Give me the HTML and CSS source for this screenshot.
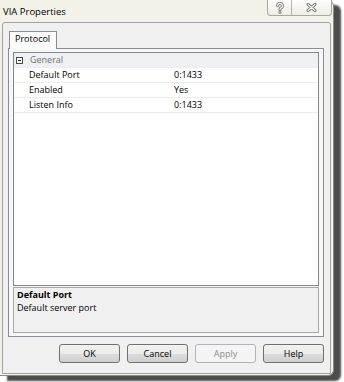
FILE: index.html
```html
<!DOCTYPE html>
<html lang="en">
<head>
    <meta charset="UTF-8">
    <title>VIA Properties</title>
    <link rel="stylesheet" href="styles.css">
</head>
<body>
<div class="window">
    <div class="titlebar">
        <span class="title">VIA Properties</span>
        <div class="caption">
            <span class="cap-btn help">
                <svg width="10" height="12" viewBox="0 0 10 12">
                    <path d="M2.6 3.8 A2.4 2.4 0 1 1 5.6 6.1 Q5 6.5 5 7.4 V7.8" fill="none" stroke="#7a7a7a" stroke-width="3" stroke-linecap="round"/>
                    <path d="M2.6 3.8 A2.4 2.4 0 1 1 5.6 6.1 Q5 6.5 5 7.4 V7.8" fill="none" stroke="#fff" stroke-width="1.1" stroke-linecap="round"/>
                    <circle cx="5" cy="10.2" r="1.5" fill="#7a7a7a"/>
                    <circle cx="5" cy="10.2" r="0.6" fill="#fff"/>
                </svg>
            </span>
            <span class="cap-btn close">
                <svg width="11" height="9" viewBox="0 0 11 9">
                    <path d="M2 1.5 L9 7.5 M9 1.5 L2 7.5" stroke="#7a7a7a" stroke-width="3" stroke-linecap="round"/>
                    <path d="M2 1.5 L9 7.5 M9 1.5 L2 7.5" stroke="#fff" stroke-width="1.1" stroke-linecap="round"/>
                </svg>
            </span>
        </div>
    </div>
    <div class="dialog">
        <div class="tabs">
            <span class="tab">Protocol</span>
        </div>
        <div class="tab-panel">
            <div class="grid">
                <div class="row category">
                    <span class="margin"><span class="toggle"></span></span>
                    <span class="name">General</span>
                </div>
                <div class="row">
                    <span class="margin"></span>
                    <span class="name">Default Port</span>
                    <span class="value">0:1433</span>
                </div>
                <div class="row">
                    <span class="margin"></span>
                    <span class="name">Enabled</span>
                    <span class="value">Yes</span>
                </div>
                <div class="row">
                    <span class="margin"></span>
                    <span class="name">Listen Info</span>
                    <span class="value">0:1433</span>
                </div>
            </div>
            <div class="desc">
                <div class="desc-title">Default Port</div>
                <div class="desc-text">Default server port</div>
            </div>
        </div>
        <div class="buttons">
            <button class="btn">OK</button>
            <button class="btn">Cancel</button>
            <button class="btn" disabled>Apply</button>
            <button class="btn">Help</button>
        </div>
    </div>
</div>
</body>
</html>
```

FILE: styles.css
```css
* {
    margin: 0;
    padding: 0;
    box-sizing: border-box;
}

html, body {
    width: 344px;
    height: 382px;
    overflow: hidden;
    background-color: #ffffff;
}

body {
    font-family: "Open Sans", "Noto Sans", sans-serif;
    font-size: 9px;
    color: #000;
}

.window {
    width: 334px;
    height: 376px;
    padding: 0 2px 1px 2px;
    background-color: #f3f2e8;
    border-right: 1px solid #8d8d88;
    border-bottom: 1px solid #8d8d88;
    border-radius: 0 6px 6px 0;
    box-shadow: 7px 5px 2px rgba(45, 45, 45, 0.85);
    display: flex;
    flex-direction: column;
}

.titlebar {
    height: 22px;
    display: flex;
    justify-content: space-between;
    align-items: flex-start;
}

.title {
    padding: 5px 0 0 1px;
    line-height: 14px;
    font-size: 9.5px;
}

.caption {
    display: flex;
    height: 16px;
    margin-right: -1px;
    border: 1px solid #a9a9a3;
    border-top: none;
    border-radius: 0 0 4px 4px;
    background: linear-gradient(#fdfdfb, #eeede6);
}

.cap-btn {
    display: flex;
    align-items: center;
    justify-content: center;
}

.cap-btn.help {
    width: 24px;
    border-right: 1px solid #b4b4ae;
}

.cap-btn.close {
    width: 39px;
}

.dialog {
    height: 352px;
    border: 1px solid #a3a3a3;
    border-radius: 3px 3px 0 0;
    background-color: #f0f0f0;
    display: flex;
    flex-direction: column;
    padding: 8px 6px 10px 5px;
}

.tabs {
    display: flex;
    padding-left: 1px;
    margin-bottom: -1px;
    position: relative;
}

.tab {
    height: 18px;
    padding: 0 6px 0 5px;
    line-height: 14px;
    border: 1px solid #898c95;
    border-bottom: none;
    background-color: #fbfbfb;
}

.tab-panel {
    height: 289px;
    border: 1px solid #898c95;
    background-color: #f7f7f7;
    padding: 3px 4px;
    display: flex;
    flex-direction: column;
    gap: 1px;
}

.grid {
    flex: 1;
    border: 1px solid #828790;
    background-color: #ffffff;
}

.row {
    display: flex;
    height: 15px;
    line-height: 14px;
    border-bottom: 1px solid #ededed;
}

.row .margin {
    width: 12px;
    background-color: #ffffff;
    display: flex;
    align-items: center;
    padding-left: 2px;
}

.row.category {
    height: 15px;
    background-color: #eef0f4;
}

.row.category .margin {
    background-color: #eef0f4;
}

.toggle {
    width: 7px;
    height: 7px;
    border: 1px solid #4a4a4a;
    background-color: #fff;
    display: flex;
    align-items: center;
    justify-content: center;
}

.toggle::after {
    content: "";
    width: 3px;
    height: 1px;
    background-color: #222;
}

.name {
    width: 146px;
    padding-left: 3px;
}

.category .name {
    padding-left: 4px;
    color: #707070;
}

.value {
    padding-left: 2px;
}

.desc {
    height: 46px;
    border: 1px solid #a8a8a8;
    background-color: #f0f0f0;
    padding-left: 3px;
}

.desc-title {
    font-weight: bold;
    line-height: 13px;
}

.desc-text {
    line-height: 13px;
}

.buttons {
    display: flex;
    justify-content: flex-end;
    gap: 7px;
    margin-top: 7px;
}

.btn {
    width: 61px;
    height: 19px;
    font-family: "Open Sans", "Noto Sans", sans-serif;
    font-size: 9px;
    color: #000;
    border: 1px solid #707070;
    border-radius: 3px;
    background: linear-gradient(#f2f2f2 0%, #ebebeb 50%, #dddddd 51%, #cfcfcf 100%);
}

.btn:disabled {
    color: #8d8d8d;
    border-color: #b0b4b7;
    background: #f4f4f4;
}
```
